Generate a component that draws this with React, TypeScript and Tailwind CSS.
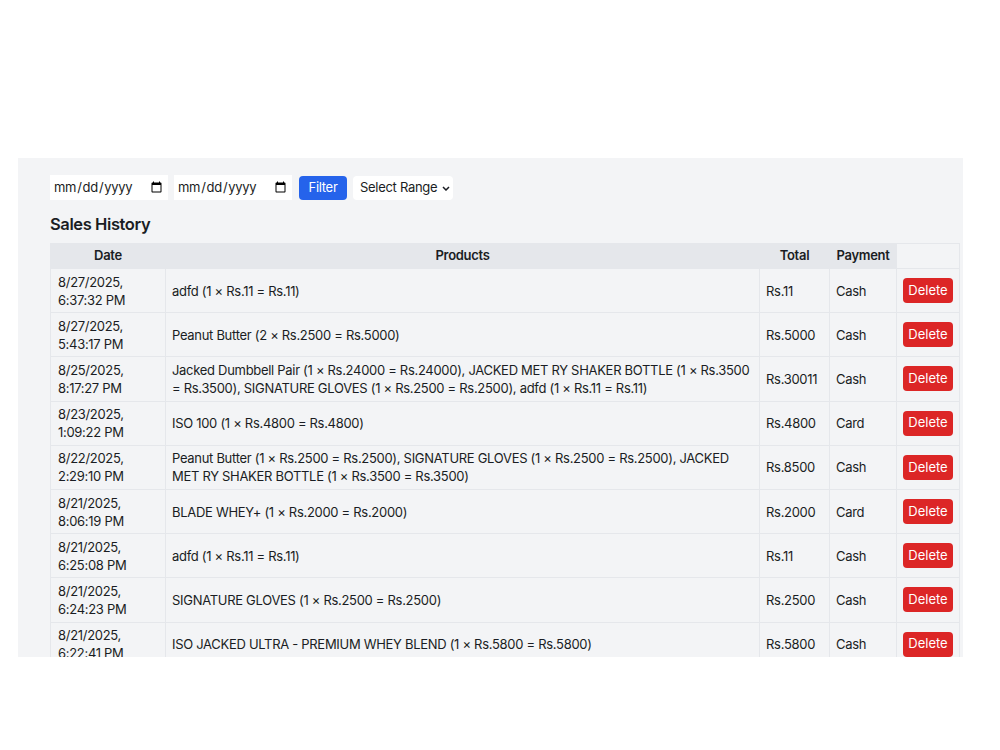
const sales = [
  { date: "8/27/2025, 6:37:32 PM", products: "adfd (1 × Rs.11 = Rs.11)", total: "Rs.11", payment: "Cash" },
  { date: "8/27/2025, 5:43:17 PM", products: "Peanut Butter (2 × Rs.2500 = Rs.5000)", total: "Rs.5000", payment: "Cash" },
  {
    date: "8/25/2025, 8:17:27 PM",
    products:
      "Jacked Dumbbell Pair (1 × Rs.24000 = Rs.24000), JACKED MET RY SHAKER BOTTLE (1 × Rs.3500 = Rs.3500), SIGNATURE GLOVES (1 × Rs.2500 = Rs.2500), adfd (1 × Rs.11 = Rs.11)",
    total: "Rs.30011",
    payment: "Cash",
  },
  { date: "8/23/2025, 1:09:22 PM", products: "ISO 100 (1 × Rs.4800 = Rs.4800)", total: "Rs.4800", payment: "Card" },
  {
    date: "8/22/2025, 2:29:10 PM",
    products:
      "Peanut Butter (1 × Rs.2500 = Rs.2500), SIGNATURE GLOVES (1 × Rs.2500 = Rs.2500), JACKED MET RY SHAKER BOTTLE (1 × Rs.3500 = Rs.3500)",
    total: "Rs.8500",
    payment: "Cash",
  },
  { date: "8/21/2025, 8:06:19 PM", products: "BLADE WHEY+ (1 × Rs.2000 = Rs.2000)", total: "Rs.2000", payment: "Card" },
  { date: "8/21/2025, 6:25:08 PM", products: "adfd (1 × Rs.11 = Rs.11)", total: "Rs.11", payment: "Cash" },
  { date: "8/21/2025, 6:24:23 PM", products: "SIGNATURE GLOVES (1 × Rs.2500 = Rs.2500)", total: "Rs.2500", payment: "Cash" },
  {
    date: "8/21/2025, 6:22:41 PM",
    products: "ISO JACKED ULTRA - PREMIUM WHEY BLEND (1 × Rs.5800 = Rs.5800)",
    total: "Rs.5800",
    payment: "Cash",
  },
];

const App = () => {
  return (
    <div className="w-[1000px] h-[750px] bg-white overflow-hidden font-['Inter',sans-serif] text-[13px] tracking-[-0.3px] text-[#1a1d23]">
      <div className="mt-[158px] ml-[18px] w-[945px] h-[499px] overflow-hidden bg-[#f3f4f6] pl-8 pt-[17px]">
        {/* Filters */}
        <div className="flex items-center gap-[6px]">
          <input type="date" className="w-[118px] h-[25px] bg-white px-[3px] text-[13px] outline-none" />
          <input type="date" className="w-[118px] h-[25px] bg-white px-[3px] text-[13px] outline-none" />
          <button className="ml-[1px] h-[24px] w-[48px] rounded bg-[#2563eb] text-white text-[13px]">Filter</button>
          <div className="relative">
            <select className="appearance-none h-[24px] w-[100px] bg-white pl-[7px] text-[13px] rounded-sm outline-none">
              <option>Select Range</option>
            </select>
            <svg
              className="absolute right-[3px] top-[10px] pointer-events-none"
              width="8"
              height="5"
              viewBox="0 0 8 5"
              fill="none"
              stroke="#1a1d23"
              strokeWidth="1.5"
            >
              <path d="M1 1l3 3 3-3" />
            </svg>
          </div>
        </div>

        <h2 className="mt-[12px] mb-[7px] h-[24px] leading-[24px] text-[16.5px] tracking-[-0.4px] font-semibold">
          Sales History
        </h2>

        {/* Table */}
        <table className="w-[909px] table-fixed border-collapse">
          <colgroup>
            <col className="w-[115px]" />
            <col className="w-[594px]" />
            <col className="w-[70px]" />
            <col className="w-[67px]" />
            <col className="w-[63px]" />
          </colgroup>
          <thead>
            <tr className="h-[25px]">
              <th className="bg-[#e5e7eb] font-semibold border border-[#e5e7eb]">Date</th>
              <th className="bg-[#e5e7eb] font-semibold border border-[#e5e7eb]">Products</th>
              <th className="bg-[#e5e7eb] font-semibold border border-[#e5e7eb]">Total</th>
              <th className="bg-[#e5e7eb] font-semibold border border-[#e5e7eb]">Payment</th>
              <th className="border border-[#e5e7eb]"></th>
            </tr>
          </thead>
          <tbody>
            {sales.map((s, i) => (
              <tr key={i} className="h-[44px]">
                <td className="border border-[#e5e7eb] px-[7px] py-[3.6px] leading-[18px]">{s.date}</td>
                <td className="border border-[#e5e7eb] px-[6px] py-[3.6px] leading-[18px]">{s.products}</td>
                <td className="border border-[#e5e7eb] px-[6px] py-[3.6px] leading-[18px]">{s.total}</td>
                <td className="border border-[#e5e7eb] px-[6px] py-[3.6px] leading-[18px]">{s.payment}</td>
                <td className="border border-[#e5e7eb] px-[6px] py-[3.6px]">
                  <button className="h-[25px] w-[50px] rounded bg-[#dc2626] text-white text-[13px] tracking-normal">
                    Delete
                  </button>
                </td>
              </tr>
            ))}
          </tbody>
        </table>
      </div>
    </div>
  );
};

export default App;
